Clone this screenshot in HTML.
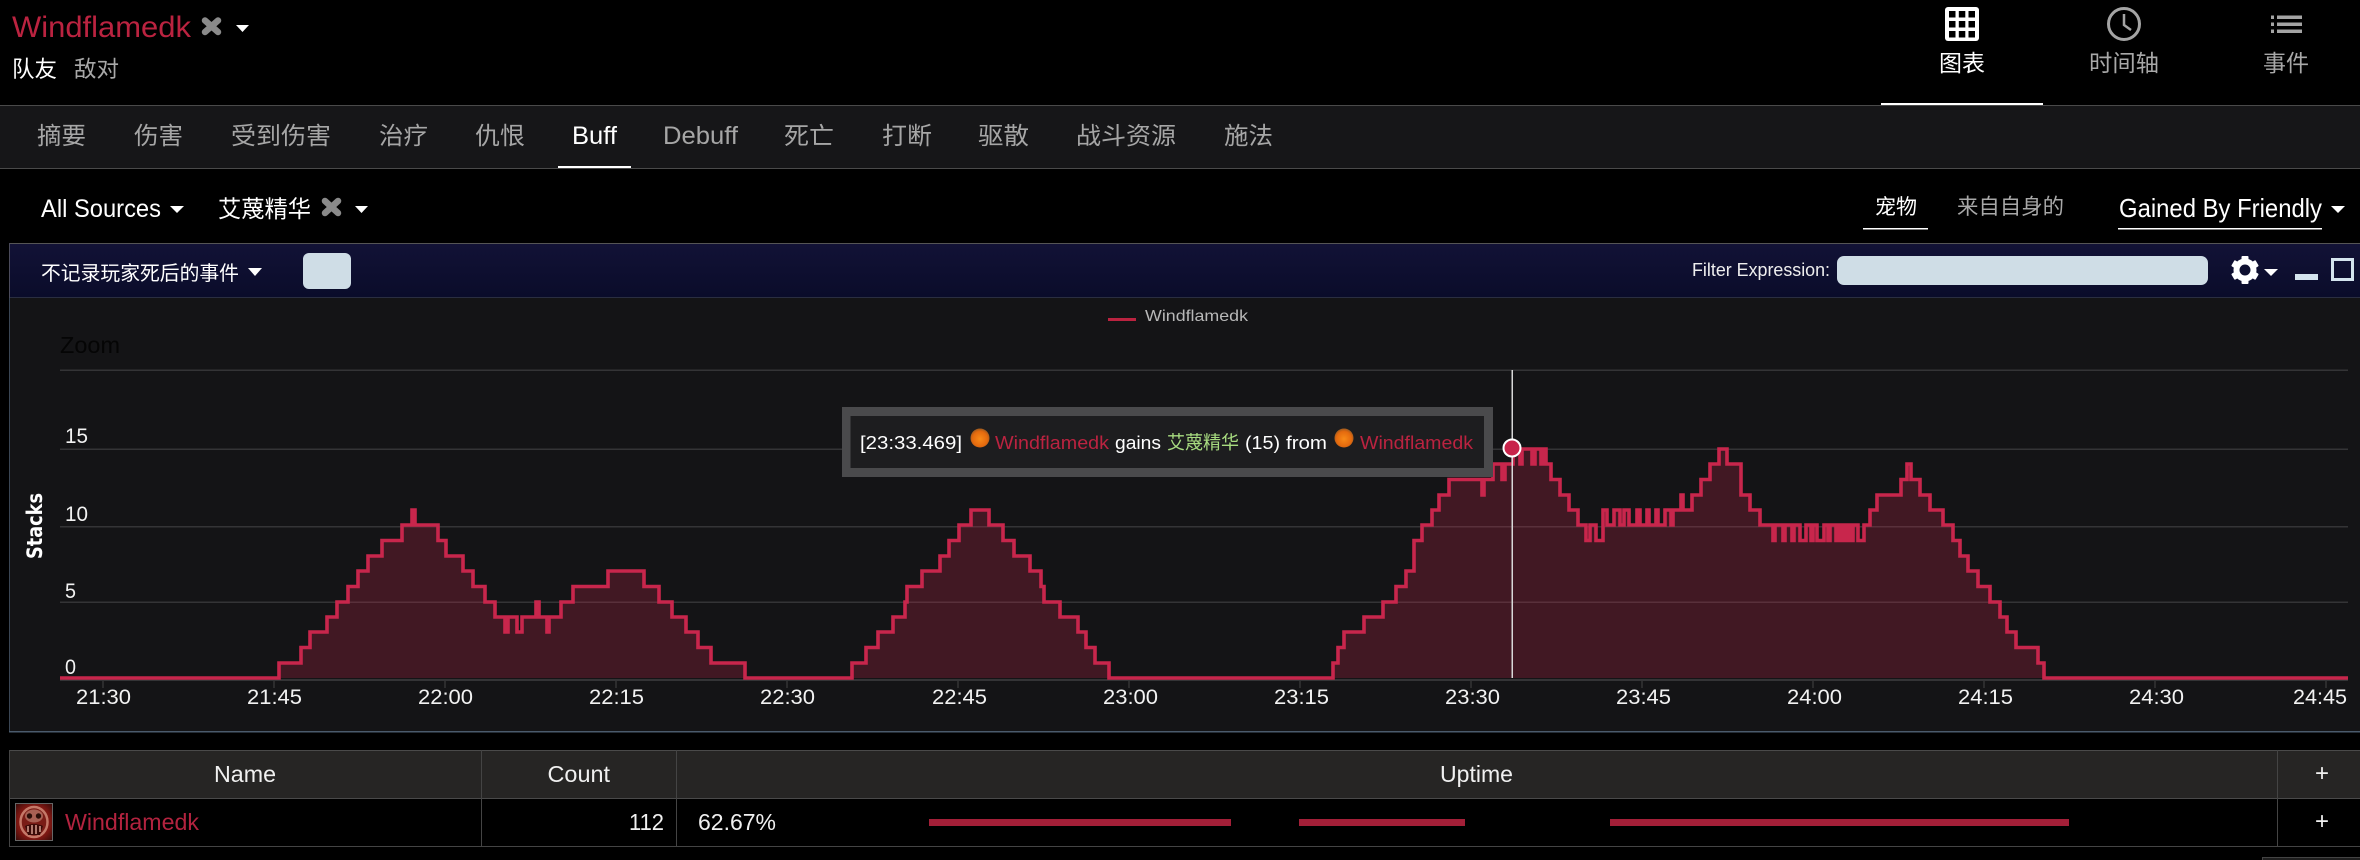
<!DOCTYPE html>
<html lang="zh">
<head>
<meta charset="utf-8">
<title>Buff</title>
<style>
html,body{margin:0;padding:0;background:#000;width:2360px;height:860px;overflow:hidden}
svg{display:block}
text{font-family:"Liberation Sans","Noto Sans CJK SC",sans-serif;fill:#fff}
.g{fill:#a8a8a8}
.r{fill:#bb2340}
.ax{font-size:21px;fill:#f2f2f2}
.tt{font-size:18.5px}
.nv{font-size:24px;fill:#a6a6a6}
.th{fill:#f0f0f0}
</style>
</head>
<body>
<svg xmlns="http://www.w3.org/2000/svg" width="2360" height="860" viewBox="0 0 2360 860">
<defs>
<linearGradient id="band" x1="0" y1="0" x2="0" y2="1"><stop offset="0" stop-color="#121236"/><stop offset="1" stop-color="#0a0c2a"/></linearGradient>
<radialGradient id="orb" cx=".5" cy=".55" r=".55"><stop offset="0" stop-color="#f88a18"/><stop offset=".72" stop-color="#e4690e"/><stop offset="1" stop-color="#9a5a20"/></radialGradient>
<radialGradient id="sk" cx=".5" cy=".5" r=".7"><stop offset="0" stop-color="#a02a22"/><stop offset=".65" stop-color="#7c1712"/><stop offset="1" stop-color="#340a08"/></radialGradient>
<path id="st" d="M60 678H279V663H301V647.500H310V632H327V617H337V602H348V586.500H358V571H368V556H382V540.500H402V525H412V510H415V525H438V540.500H446V556H463V571H473V586.500H485V602H495V617H505V632H508V617H517V632H522V617H536V602H539V617H547V632H549V617H561V602H573V586.500H608V571H644V586.500H659V602H672V617H686V632H698V647.500H711V663H745V678H852V663H866V647.500H878V632H893V617H905V602H907V586.500H922V571H940V556H949V540.500H959V525H971V510H989V525H1003V540.500H1014V556H1030V571H1041V586.500H1044V602H1060V617H1078V632H1086V647.500H1095V663H1109V678H1333V663H1338V647.500H1344V632H1364V617H1383V602H1396V586.500H1406V571H1414V540.500H1422V525H1432V510H1439V495H1449V479.500H1482V495H1484V479.500H1493V464H1502V479.500H1505V464H1513V449H1520V464H1522V449H1532V464H1535V449H1541V464H1543V449H1546V464H1551V479.500H1560V495H1569V510H1578V525H1586V540.500H1590V525H1596V540.500H1603V510H1607V525H1614V510H1620V525H1624V510H1629V525H1637V510H1640V525H1647V510H1649V525H1656V510H1658V525H1665V510H1671V525H1673V510H1681V495H1683V510H1692V495H1701V479.500H1710V464H1719V449H1727V464H1741V495H1750V510H1760V525H1773V540.500H1775V525H1783V540.500H1785V525H1792V540.500H1794V525H1800V540.500H1806V525H1811V540.500H1813V525H1817V540.500H1824V525H1828V540.500H1830V525H1836V540.500H1838V525H1841V540.500H1843V525H1846V540.500H1848V525H1850V540.500H1853V525H1858V540.500H1864V525H1870V510H1877V495H1901V479.500H1907V464H1911V479.500H1920V495H1930V510H1943V525H1953V540.500H1960V556H1968V571H1978V586.500H1990V602H2000V617H2007V632H2016V647.500H2038V663H2044V678H2348"/>
</defs>
<rect width="2360" height="860" fill="#000"/>

<!-- header -->
<text x="12" y="37" font-size="30" class="r" textLength="179" lengthAdjust="spacingAndGlyphs">Windflamedk</text>
<path d="M205 20.500L218 32M218 20.500L205 32" stroke="#8a8a8a" stroke-width="6.500" stroke-linecap="round" fill="none"/>
<polygon points="236,25 249,25 242.500,32" fill="#fff"/>
<text x="12" y="77" font-size="22.500">队友</text>
<text x="74" y="77" font-size="22.500" class="g">敌对</text>

<!-- view icons -->
<rect x="1945" y="7" width="34" height="34" rx="3" fill="#fff"/>
<g fill="#000">
<rect x="1949" y="11" width="6.500" height="6.500"/><rect x="1958.800" y="11" width="6.500" height="6.500"/><rect x="1968.500" y="11" width="6.500" height="6.500"/>
<rect x="1949" y="21" width="6.500" height="6.500"/><rect x="1958.800" y="21" width="6.500" height="6.500"/><rect x="1968.500" y="21" width="6.500" height="6.500"/>
<rect x="1949" y="31" width="6.500" height="6.500"/><rect x="1958.800" y="31" width="6.500" height="6.500"/><rect x="1968.500" y="31" width="6.500" height="6.500"/>
</g>
<text x="1939" y="71" font-size="23" textLength="46" lengthAdjust="spacingAndGlyphs">图表</text>
<rect x="1881" y="103" width="162" height="2" fill="#fff"/>
<circle cx="2124" cy="24" r="15.500" fill="none" stroke="#a4a4a4" stroke-width="3"/>
<path d="M2124 14V25L2131 30" fill="none" stroke="#a4a4a4" stroke-width="2.500"/>
<text x="2089" y="71" font-size="23" class="g" textLength="70" lengthAdjust="spacingAndGlyphs">时间轴</text>
<g fill="#a4a4a4">
<rect x="2271" y="15.500" width="3" height="3.500"/><rect x="2277" y="15.500" width="25" height="3.500"/>
<rect x="2271" y="22.500" width="3" height="3.500"/><rect x="2277" y="22.500" width="25" height="3.500"/>
<rect x="2271" y="29.500" width="3" height="3.500"/><rect x="2277" y="29.500" width="25" height="3.500"/>
</g>
<text x="2263" y="71" font-size="23" class="g" textLength="46" lengthAdjust="spacingAndGlyphs">事件</text>

<!-- nav -->
<rect x="0" y="105" width="2360" height="64" fill="#161618"/>
<rect x="0" y="105" width="2360" height="1" fill="#4a4a4a"/>
<rect x="0" y="168" width="2360" height="1" fill="#4a4a4a"/>
<text x="37" y="144" class="nv" textLength="49" lengthAdjust="spacingAndGlyphs">摘要</text>
<text x="134" y="144" class="nv" textLength="49" lengthAdjust="spacingAndGlyphs">伤害</text>
<text x="231" y="144" class="nv" textLength="100" lengthAdjust="spacingAndGlyphs">受到伤害</text>
<text x="379" y="144" class="nv" textLength="49" lengthAdjust="spacingAndGlyphs">治疗</text>
<text x="475" y="144" class="nv" textLength="50" lengthAdjust="spacingAndGlyphs">仇恨</text>
<text x="572" y="144" font-size="25" textLength="45" lengthAdjust="spacingAndGlyphs">Buff</text>
<text x="663" y="144" class="nv" style="font-size:25px" textLength="75" lengthAdjust="spacingAndGlyphs">Debuff</text>
<text x="784" y="144" class="nv" textLength="50" lengthAdjust="spacingAndGlyphs">死亡</text>
<text x="882" y="144" class="nv" textLength="50" lengthAdjust="spacingAndGlyphs">打断</text>
<text x="978" y="144" class="nv" textLength="51" lengthAdjust="spacingAndGlyphs">驱散</text>
<text x="1076" y="144" class="nv" textLength="100" lengthAdjust="spacingAndGlyphs">战斗资源</text>
<text x="1224" y="144" class="nv" textLength="49" lengthAdjust="spacingAndGlyphs">施法</text>
<rect x="558" y="166" width="73" height="2" fill="#fff"/>

<!-- filter row -->
<text x="41" y="217" font-size="25" textLength="120" lengthAdjust="spacingAndGlyphs">All Sources</text>
<polygon points="170,206 184,206 177,213" fill="#fff"/>
<text x="218" y="217" font-size="23.500" textLength="93" lengthAdjust="spacingAndGlyphs">艾蔑精华</text>
<path d="M325 201L338 213M338 201L325 213" stroke="#8a8a8a" stroke-width="6.500" stroke-linecap="round" fill="none"/>
<polygon points="355,206 368,206 361.500,213" fill="#fff"/>
<text x="1875" y="214" font-size="21" textLength="42" lengthAdjust="spacingAndGlyphs">宠物</text>
<rect x="1863" y="228" width="65" height="1.500" fill="#fff"/>
<text x="1957" y="214" font-size="21.500" class="g" textLength="107" lengthAdjust="spacingAndGlyphs">来自自身的</text>
<text x="2119" y="217" font-size="26" textLength="203" lengthAdjust="spacingAndGlyphs">Gained By Friendly</text>
<rect x="2118" y="228" width="204" height="1.500" fill="#fff"/>
<polygon points="2331,206 2345,206 2338,213" fill="#fff"/>

<!-- toolbar -->
<rect x="9" y="243" width="2351" height="55" fill="url(#band)"/>
<rect x="9" y="243" width="2351" height="1" fill="#555"/>
<rect x="9" y="297.500" width="2351" height="1" fill="#4a5058"/>
<rect x="9" y="243" width="1" height="55" fill="#4a4a5a"/>
<text x="41" y="280" font-size="19.800" textLength="198" lengthAdjust="spacingAndGlyphs">不记录玩家死后的事件</text>
<polygon points="248,268 262,268 255,276" fill="#fff"/>
<rect x="303" y="253" width="48" height="36" rx="6" fill="#cfdde6"/>
<text x="1692" y="276" font-size="18" style="fill:#eee" textLength="138" lengthAdjust="spacingAndGlyphs">Filter Expression:</text>
<rect x="1837" y="256" width="371" height="29" rx="7" fill="#cfdde6"/>
<g transform="translate(2245 270)">
<circle r="8.500" fill="none" stroke="#fff" stroke-width="6"/>
<g fill="#fff">
<rect x="-3.500" y="-14" width="7" height="7" rx="1"/>
<rect x="-3.500" y="7" width="7" height="7" rx="1"/>
<rect x="-3.500" y="-14" width="7" height="7" rx="1" transform="rotate(60)"/>
<rect x="-3.500" y="7" width="7" height="7" rx="1" transform="rotate(60)"/>
<rect x="-3.500" y="-14" width="7" height="7" rx="1" transform="rotate(120)"/>
<rect x="-3.500" y="7" width="7" height="7" rx="1" transform="rotate(120)"/>
</g>
</g>
<polygon points="2264,269 2278,269 2271,276" fill="#fff"/>
<rect x="2295" y="274" width="23" height="6" fill="#d4e4ee"/>
<rect x="2332.500" y="259.500" width="20" height="20" fill="none" stroke="#d4e4ee" stroke-width="3"/>

<!-- chart -->
<rect x="9" y="298" width="2351" height="433" fill="#141416"/>
<rect x="9" y="298" width="1" height="433" fill="#3a4654"/>
<rect x="9" y="731" width="2351" height="1.500" fill="#4a5a6c"/>
<rect x="1108" y="318" width="28" height="3" fill="#bb2340"/>
<text x="1145" y="321" font-size="16" style="fill:#b8b8b8" textLength="103" lengthAdjust="spacingAndGlyphs">Windflamedk</text>
<text x="60" y="353" font-size="23" style="fill:#050505" textLength="60" lengthAdjust="spacingAndGlyphs">Zoom</text>
<g fill="#343436">
<rect x="60" y="369.500" width="2288" height="1.500"/>
<rect x="60" y="448.500" width="2288" height="1.500"/>
<rect x="60" y="526" width="2288" height="1.500"/>
<rect x="60" y="601.500" width="2288" height="1.500"/>
<rect x="60" y="679" width="2288" height="2"/>
</g>
<g fill="#444">
<rect x="102.500" y="681" width="1" height="7"/><rect x="273.500" y="681" width="1" height="7"/><rect x="444.500" y="681" width="1" height="7"/><rect x="615.500" y="681" width="1" height="7"/><rect x="786.500" y="681" width="1" height="7"/><rect x="957.500" y="681" width="1" height="7"/><rect x="1128.500" y="681" width="1" height="7"/><rect x="1299.500" y="681" width="1" height="7"/><rect x="1470.500" y="681" width="1" height="7"/><rect x="1641.500" y="681" width="1" height="7"/><rect x="1812.500" y="681" width="1" height="7"/><rect x="1983.500" y="681" width="1" height="7"/><rect x="2154.500" y="681" width="1" height="7"/><rect x="2325.500" y="681" width="1" height="7"/>
</g>
<use href="#st" fill="#c8234a" fill-opacity=".25"/>
<use href="#st" fill="none" stroke="#c8264c" stroke-width="3.600" stroke-linejoin="miter"/>

<text class="ax" x="65" y="443" textLength="23" lengthAdjust="spacingAndGlyphs">15</text>
<text class="ax" x="65" y="521" textLength="23" lengthAdjust="spacingAndGlyphs">10</text>
<text class="ax" x="65" y="598" textLength="11" lengthAdjust="spacingAndGlyphs">5</text>
<text class="ax" x="65" y="674" textLength="11" lengthAdjust="spacingAndGlyphs">0</text>
<text x="42" y="526" transform="rotate(-90 42 526)" text-anchor="middle" font-size="21" font-weight="700" style="font-family:'DejaVu Sans',sans-serif" textLength="66" lengthAdjust="spacingAndGlyphs">Stacks</text>

<g>
<text class="ax" x="76" y="704" textLength="55" lengthAdjust="spacingAndGlyphs">21:30</text>
<text class="ax" x="247" y="704" textLength="55" lengthAdjust="spacingAndGlyphs">21:45</text>
<text class="ax" x="418" y="704" textLength="55" lengthAdjust="spacingAndGlyphs">22:00</text>
<text class="ax" x="589" y="704" textLength="55" lengthAdjust="spacingAndGlyphs">22:15</text>
<text class="ax" x="760" y="704" textLength="55" lengthAdjust="spacingAndGlyphs">22:30</text>
<text class="ax" x="932" y="704" textLength="55" lengthAdjust="spacingAndGlyphs">22:45</text>
<text class="ax" x="1103" y="704" textLength="55" lengthAdjust="spacingAndGlyphs">23:00</text>
<text class="ax" x="1274" y="704" textLength="55" lengthAdjust="spacingAndGlyphs">23:15</text>
<text class="ax" x="1445" y="704" textLength="55" lengthAdjust="spacingAndGlyphs">23:30</text>
<text class="ax" x="1616" y="704" textLength="55" lengthAdjust="spacingAndGlyphs">23:45</text>
<text class="ax" x="1787" y="704" textLength="55" lengthAdjust="spacingAndGlyphs">24:00</text>
<text class="ax" x="1958" y="704" textLength="55" lengthAdjust="spacingAndGlyphs">24:15</text>
<text class="ax" x="2129" y="704" textLength="55" lengthAdjust="spacingAndGlyphs">24:30</text>
<text class="ax" x="2293" y="704" textLength="54" lengthAdjust="spacingAndGlyphs">24:45</text>
</g>

<!-- crosshair -->
<rect x="1511.500" y="370" width="1.500" height="308" fill="#d8d8d8"/>

<!-- tooltip -->
<rect x="842" y="407" width="651" height="70" fill="#4a4a4c"/>
<rect x="850.500" y="416" width="633.500" height="52" fill="#1d1d1f"/>
<text class="tt" x="860" y="449" textLength="102" lengthAdjust="spacingAndGlyphs">[23:33.469]</text>
<ellipse cx="980" cy="438" rx="9.500" ry="9.500" fill="url(#orb)"/>
<text class="tt r" x="995" y="449" textLength="114" lengthAdjust="spacingAndGlyphs">Windflamedk</text>
<text class="tt" x="1115" y="449" textLength="46" lengthAdjust="spacingAndGlyphs">gains</text>
<text class="tt" x="1167" y="449" style="fill:#a8dc80" textLength="72" lengthAdjust="spacingAndGlyphs">艾蔑精华</text>
<text class="tt" x="1245" y="449" textLength="35" lengthAdjust="spacingAndGlyphs">(15)</text>
<text class="tt" x="1286" y="449" textLength="41" lengthAdjust="spacingAndGlyphs">from</text>
<ellipse cx="1344" cy="438" rx="9.500" ry="9.500" fill="url(#orb)"/>
<text class="tt r" x="1360" y="449" textLength="113" lengthAdjust="spacingAndGlyphs">Windflamedk</text>
<circle cx="1512" cy="448" r="8.500" fill="#c8234a" stroke="#fff" stroke-width="2"/>

<!-- table -->
<rect x="9" y="750" width="2351" height="48" fill="#262524"/>
<rect x="9" y="750" width="2351" height="1" fill="#4a4a4a"/>
<rect x="9" y="798" width="2351" height="1" fill="#4a4a4a"/>
<rect x="9" y="846" width="2351" height="1" fill="#444"/>
<g fill="#444">
<rect x="9" y="750" width="1" height="96"/>
<rect x="481" y="750" width="1" height="96"/>
<rect x="676" y="750" width="1" height="96"/>
<rect x="2277" y="750" width="1" height="96"/>
</g>
<text x="214" y="782" font-size="23" class="th" textLength="62" lengthAdjust="spacingAndGlyphs">Name</text>
<text x="547.500" y="782" font-size="23" class="th" textLength="62.500" lengthAdjust="spacingAndGlyphs">Count</text>
<text x="1440" y="782" font-size="23" class="th" textLength="73" lengthAdjust="spacingAndGlyphs">Uptime</text>
<text x="2322" y="781" font-size="24" text-anchor="middle" class="th">+</text>
<text x="2322" y="829" font-size="24" text-anchor="middle" class="th">+</text>

<!-- player icon -->
<rect x="15.500" y="803.500" width="37" height="37" fill="url(#sk)" stroke="#666" stroke-width="1"/>
<ellipse cx="34" cy="822" rx="13.500" ry="15" fill="#7a1c16" stroke="#c47868" stroke-width="2.500"/>
<ellipse cx="34" cy="816" rx="9" ry="6.500" fill="#a86054"/>
<circle cx="29.500" cy="816" r="2.700" fill="#2a0d08"/><circle cx="38.500" cy="816" r="2.700" fill="#2a0d08"/>
<path d="M25 826Q34 822 43 826L40 835H28Z" fill="#3a0b08"/>
<path d="M28 826V832M32 825V834M36 825V834M40 826V832" stroke="#d8a090" stroke-width="1.500"/>

<text x="65" y="830" font-size="23.500" style="fill:#b3233f" textLength="134" lengthAdjust="spacingAndGlyphs">Windflamedk</text>
<text x="629" y="830" font-size="23" class="th" textLength="35" lengthAdjust="spacingAndGlyphs">112</text>
<text x="698" y="830" font-size="23" class="th" textLength="78" lengthAdjust="spacingAndGlyphs">62.67%</text>
<rect x="929" y="819" width="302" height="7" fill="#a31f38"/>
<rect x="1299" y="819" width="166" height="7" fill="#a31f38"/>
<rect x="1610" y="819" width="459" height="7" fill="#a31f38"/>
<rect x="2262.500" y="857.500" width="100" height="6" fill="#1e1e1e" stroke="#444"/>
</svg>
</body>
</html>
